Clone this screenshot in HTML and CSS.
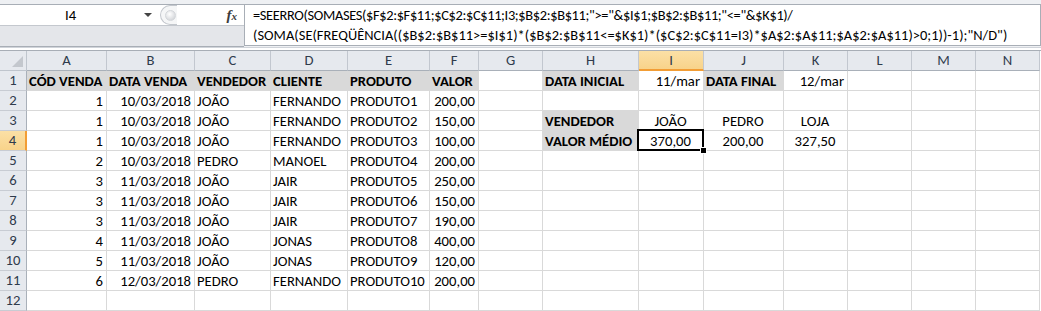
FILE: index.html
```html
<!DOCTYPE html>
<html lang="pt-BR">
<head>
    <meta charset="UTF-8">
    <meta name="viewport" content="width=device-width, initial-scale=1.0">
    <title>Planilha - Valor médio</title>
    <link rel="stylesheet" href="styles.css">
</head>
<body>
    <div class="formula-bar">
        <div class="name-area">
            <div class="name-row">
                <div class="name-box">I4</div>
                <span class="drop"></span>
                <span class="knob"><span class="knob-dot"></span></span>
                <span class="fx">f<small>x</small></span>
            </div>
        </div>
        <div class="formula">
            <div class="formula-line tight">=SEERRO(SOMASES($F$2:$F$11;$C$2:$C$11;I3;$B$2:$B$11;"&gt;="&amp;$I$1;$B$2:$B$11;"&lt;="&amp;$K$1)/</div>
            <div class="formula-line">(SOMA(SE(FREQÜÊNCIA(($B$2:$B$11&gt;=$I$1)*($B$2:$B$11&lt;=$K$1)*($C$2:$C$11=I3)*$A$2:$A$11;$A$2:$A$11)&gt;0;1))-1);"N/D")</div>
        </div>
    </div>
    <div class="strip"></div>

    <div class="sheet">
        <!-- column headers -->
        <div class="corner"></div>
        <div class="hd">A</div><div class="hd">B</div><div class="hd">C</div><div class="hd">D</div><div class="hd">E</div><div class="hd">F</div><div class="hd">G</div><div class="hd">H</div><div class="hd on">I</div><div class="hd">J</div><div class="hd">K</div><div class="hd">L</div><div class="hd">M</div><div class="hd">N</div>

        <div class="rh">1</div>
        <div class="c lbl">CÓD VENDA</div><div class="c lbl">DATA VENDA</div><div class="c lbl">VENDEDOR</div><div class="c lbl">CLIENTE</div><div class="c lbl">PRODUTO</div><div class="c lbl">VALOR</div><div class="c"></div><div class="c lbl">DATA INICIAL</div><div class="c r">11/mar</div><div class="c lbl">DATA FINAL</div><div class="c r">12/mar</div><div class="c"></div><div class="c"></div><div class="c"></div>

        <div class="rh">2</div>
        <div class="c r">1</div><div class="c r">10/03/2018</div><div class="c">JOÃO</div><div class="c">FERNANDO</div><div class="c">PRODUTO1</div><div class="c r">200,00</div><div class="c"></div><div class="c"></div><div class="c"></div><div class="c"></div><div class="c"></div><div class="c"></div><div class="c"></div><div class="c"></div>

        <div class="rh">3</div>
        <div class="c r">1</div><div class="c r">10/03/2018</div><div class="c">JOÃO</div><div class="c">FERNANDO</div><div class="c">PRODUTO2</div><div class="c r">150,00</div><div class="c"></div><div class="c lbl">VENDEDOR</div><div class="c ctr">JOÃO</div><div class="c ctr">PEDRO</div><div class="c ctr">LOJA</div><div class="c"></div><div class="c"></div><div class="c"></div>

        <div class="rh on">4</div>
        <div class="c r">1</div><div class="c r">10/03/2018</div><div class="c">JOÃO</div><div class="c">FERNANDO</div><div class="c">PRODUTO3</div><div class="c r">100,00</div><div class="c"></div><div class="c lbl">VALOR MÉDIO</div><div class="c ctr sel">370,00</div><div class="c ctr">200,00</div><div class="c ctr">327,50</div><div class="c"></div><div class="c"></div><div class="c"></div>

        <div class="rh">5</div>
        <div class="c r">2</div><div class="c r">10/03/2018</div><div class="c">PEDRO</div><div class="c">MANOEL</div><div class="c">PRODUTO4</div><div class="c r">200,00</div><div class="c"></div><div class="c"></div><div class="c"></div><div class="c"></div><div class="c"></div><div class="c"></div><div class="c"></div><div class="c"></div>

        <div class="rh">6</div>
        <div class="c r">3</div><div class="c r">11/03/2018</div><div class="c">JOÃO</div><div class="c">JAIR</div><div class="c">PRODUTO5</div><div class="c r">250,00</div><div class="c"></div><div class="c"></div><div class="c"></div><div class="c"></div><div class="c"></div><div class="c"></div><div class="c"></div><div class="c"></div>

        <div class="rh">7</div>
        <div class="c r">3</div><div class="c r">11/03/2018</div><div class="c">JOÃO</div><div class="c">JAIR</div><div class="c">PRODUTO6</div><div class="c r">150,00</div><div class="c"></div><div class="c"></div><div class="c"></div><div class="c"></div><div class="c"></div><div class="c"></div><div class="c"></div><div class="c"></div>

        <div class="rh">8</div>
        <div class="c r">3</div><div class="c r">11/03/2018</div><div class="c">JOÃO</div><div class="c">JAIR</div><div class="c">PRODUTO7</div><div class="c r">190,00</div><div class="c"></div><div class="c"></div><div class="c"></div><div class="c"></div><div class="c"></div><div class="c"></div><div class="c"></div><div class="c"></div>

        <div class="rh">9</div>
        <div class="c r">4</div><div class="c r">11/03/2018</div><div class="c">JOÃO</div><div class="c">JONAS</div><div class="c">PRODUTO8</div><div class="c r">400,00</div><div class="c"></div><div class="c"></div><div class="c"></div><div class="c"></div><div class="c"></div><div class="c"></div><div class="c"></div><div class="c"></div>

        <div class="rh">10</div>
        <div class="c r">5</div><div class="c r">11/03/2018</div><div class="c">JOÃO</div><div class="c">JONAS</div><div class="c">PRODUTO9</div><div class="c r">120,00</div><div class="c"></div><div class="c"></div><div class="c"></div><div class="c"></div><div class="c"></div><div class="c"></div><div class="c"></div><div class="c"></div>

        <div class="rh">11</div>
        <div class="c r">6</div><div class="c r">12/03/2018</div><div class="c">PEDRO</div><div class="c">FERNANDO</div><div class="c">PRODUTO10</div><div class="c r">200,00</div><div class="c"></div><div class="c"></div><div class="c"></div><div class="c"></div><div class="c"></div><div class="c"></div><div class="c"></div><div class="c"></div>

        <div class="rh">12</div>
        <div class="c"></div><div class="c"></div><div class="c"></div><div class="c"></div><div class="c"></div><div class="c"></div><div class="c"></div><div class="c"></div><div class="c"></div><div class="c"></div><div class="c"></div><div class="c"></div><div class="c"></div><div class="c"></div>
    </div>
</body>
</html>
```

FILE: styles.css
```css
body {
    margin: 0;
    font-family: Carlito, Roboto, 'Liberation Sans', sans-serif;
    font-size: 14.67px;
    color: #000;
    background: #fff;
    overflow: hidden;
    width: 1041px;
    height: 311px;
}

/* formula bar */
.formula-bar {
    display: flex;
    padding-top: 4px;
    background: #eef0f3;
}

.name-area {
    width: 244px;
    flex: none;
    height: 41px;
    border-top: 1px solid #a8aeb6;
    border-bottom: 1px solid #a8aeb6;
    background: #e4e6ea;
}

.name-row {
    display: flex;
    align-items: center;
    height: 20px;
    background: #fff;
    border-bottom: 1px solid #c4c8ce;
}

.name-box {
    width: 141px;
    text-align: center;
    line-height: 20px;
}

.drop {
    width: 0;
    height: 0;
    border-left: 4px solid transparent;
    border-right: 4px solid transparent;
    border-top: 4px solid #444;
    margin-left: 3px;
}

.knob {
    width: 16px;
    height: 18px;
    margin-left: 8px;
    border: 1px solid #c3c7cd;
    border-right: none;
    border-radius: 10px 0 0 10px;
    background: #f5f6f7;
    display: flex;
    align-items: center;
    justify-content: center;
}

.knob-dot {
    width: 9px;
    height: 9px;
    border-radius: 50%;
    background: radial-gradient(circle at 40% 35%, #ffffff, #c9ccd1);
    border: 1px solid #d3d6da;
    margin-left: 2px;
}

.fx {
    margin-left: auto;
    margin-right: 7px;
    font-family: 'Liberation Serif', serif;
    font-style: italic;
    font-weight: bold;
    font-size: 15px;
    color: #3c3c3c;
    line-height: 20px;
}

.fx small {
    font-size: 11px;
}

.formula {
    flex: 1;
    height: 40px;
    background: #fff;
    border: 1px solid #a8aeb6;
    padding-left: 8px;
    font-size: 14.4px;
}

.formula-line {
    height: 20px;
    line-height: 20px;
    white-space: nowrap;
    letter-spacing: 0.04px;
}

.formula-line.tight {
    letter-spacing: -0.34px;
}

.strip {
    height: 2px;
    background: #fff;
    border-bottom: 1px solid #a8aeb6;
    border-top: 1px solid #d0d4da;
}

/* worksheet */
.sheet {
    display: grid;
    grid-template-columns: 27px 80px 88px 76px 77px 82px 49px 64px 96px 65px 80px 64px 64px 64px 64px;
    grid-auto-rows: 20px;
}

.corner,
.hd,
.rh,
.c {
    box-sizing: border-box;
    border-right: 1px solid #d9d9d9;
    border-bottom: 1px solid #d9d9d9;
    white-space: nowrap;
    overflow: hidden;
}

.corner {
    background: #e6e9ee;
    border-color: #bfc5cd;
    position: relative;
}

.corner::after {
    content: '';
    position: absolute;
    right: 3px;
    bottom: 3px;
    border-left: 11px solid transparent;
    border-bottom: 11px solid #c3c7cd;
}

.hd {
    background: #e6e9ee;
    border-right-color: #c2c7cf;
    border-bottom-color: #a9b0b9;
    text-align: center;
    line-height: 19px;
    color: #2f3b4c;
}

.rh {
    background: #e6e9ee;
    border-right-color: #a9b0b9;
    border-bottom-color: #c8ccd3;
    text-align: center;
    line-height: 19px;
    color: #2f3b4c;
}

.hd.on {
    background: linear-gradient(#fbe0a6, #f8d38a);
    border-bottom: 2px solid #f29d35;
    line-height: 18px;
}

.rh.on {
    background: linear-gradient(#fbe0a6, #f8d38a);
    border-right: 2px solid #f29d35;
}

.c {
    padding: 1px 3px 0 2px;
    line-height: 18px;
}

.c.r {
    text-align: right;
}

.c.ctr {
    text-align: center;
}

.c.lbl {
    background: #d9d9d9;
    font-weight: bold;
}

.c.sel {
    position: relative;
    overflow: visible;
}

.c.sel::after {
    content: '';
    position: absolute;
    left: -2px;
    top: -2px;
    right: -1px;
    bottom: -1px;
    border: 2px solid #000;
}

.c.sel::before {
    content: '';
    position: absolute;
    right: -4px;
    bottom: -4px;
    width: 5px;
    height: 5px;
    background: #000;
    border: 1px solid #fff;
    z-index: 1;
}
```
